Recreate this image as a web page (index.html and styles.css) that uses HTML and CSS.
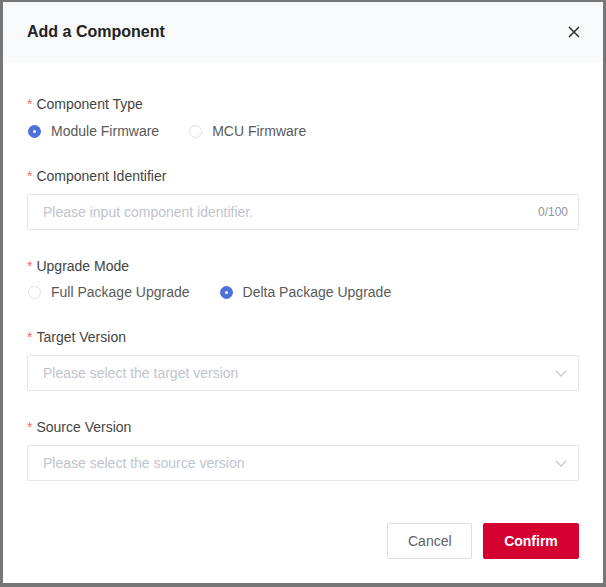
FILE: index.html
```html
<!doctype html>
<html lang="en">
<head>
<meta charset="utf-8">
<meta name="viewport" content="width=device-width,initial-scale=1">
<title>Add a Component</title>
<link rel="stylesheet" href="styles.css">
</head>
<body>
<div class="mask">
<div class="dialog">
  <header class="dlg-head">
    <span class="dlg-title">Add a Component</span>
    <button class="close" aria-label="Close">
      <svg width="12" height="12" viewBox="0 0 12 12"><path d="M1 1L11 11M11 1L1 11" stroke="#333" stroke-width="1.6" fill="none"/></svg>
    </button>
  </header>

  <main class="dlg-body">
    <div class="item radio-item">
      <label class="lbl"><i>*</i>Component Type</label>
      <div class="radios">
        <span class="radio on"><b></b>Module Firmware</span>
        <span class="radio"><b></b>MCU Firmware</span>
      </div>
    </div>

    <div class="item">
      <label class="lbl"><i>*</i>Component Identifier</label>
      <div class="field">
        <span class="ph">Please input component identifier.</span>
        <span class="count">0/100</span>
      </div>
    </div>

    <div class="item radio-item tight">
      <label class="lbl"><i>*</i>Upgrade Mode</label>
      <div class="radios">
        <span class="radio"><b></b>Full Package Upgrade</span>
        <span class="radio on"><b></b>Delta Package Upgrade</span>
      </div>
    </div>

    <div class="item">
      <label class="lbl"><i>*</i>Target Version</label>
      <div class="field">
        <span class="ph">Please select the target version</span>
        <svg class="arrow" width="12" height="7" viewBox="0 0 12 7"><path d="M1 1L6 6L11 1" stroke="#c0c4cc" stroke-width="1.2" fill="none"/></svg>
      </div>
    </div>

    <div class="item">
      <label class="lbl"><i>*</i>Source Version</label>
      <div class="field">
        <span class="ph">Please select the source version</span>
        <svg class="arrow" width="12" height="7" viewBox="0 0 12 7"><path d="M1 1L6 6L11 1" stroke="#c0c4cc" stroke-width="1.2" fill="none"/></svg>
      </div>
    </div>
  </main>

  <footer class="dlg-foot">
    <button class="btn">Cancel</button>
    <button class="btn primary">Confirm</button>
  </footer>
</div>
</div>
</body>
</html>
```

FILE: styles.css
```css
*{box-sizing:border-box}
body{margin:0;background:#767676;font-family:"Liberation Sans",Arial,sans-serif;font-size:14px;color:#333}
.mask{padding:2px 3px}
.dialog{width:600px;height:581px;background:#fff;display:flex;flex-direction:column}
.dlg-head{height:60px;background:#f8f9fb;display:flex;align-items:center;justify-content:space-between;padding:0 23px 0 24px}
.dlg-title{font-size:16px;font-weight:700;color:#222}
.close{border:0;background:none;padding:0;display:flex;cursor:pointer}
.dlg-body{padding:32px 24px 0;flex:1}
.item{margin-bottom:26px}
.item.radio-item{margin-bottom:25px}
.lbl{display:block;line-height:20px;color:#444;margin-bottom:8px}
.radio-item .lbl{margin-bottom:7px}
.radio-item.tight .lbl{margin-bottom:6px}
.lbl i{font-style:normal;color:#f56c6c;margin-right:4px}
.radios{display:flex;line-height:20px;padding-left:1px}
.radio{display:flex;align-items:center;color:#5a5a5a;margin-right:30px}
.radio b{width:13px;height:13px;border:1px solid #dcdfe6;border-radius:50%;margin-right:10px;background:#fff}
.radio.on b{background:#4d70d9;border-color:#4d70d9;position:relative}
.radio.on b:after{content:"";position:absolute;left:4px;top:4px;width:3px;height:3px;border-radius:50%;background:#fff}
.field{height:36px;border:1px solid #e4e5ec;border-radius:2px;display:flex;align-items:center;justify-content:space-between;padding:0 10px 0 15px}
.ph{color:#c0c4cc}
.count{font-size:12px;color:#909399}
.arrow{margin-right:1px}
.dlg-foot{display:flex;justify-content:flex-end;gap:11px;padding:0 24px 24px}
.btn{font:inherit;height:36px;border:1px solid #dcdfe6;border-radius:2px;background:#fff;color:#606266;padding:0 20px;width:85px;cursor:pointer}
.btn.primary{background:#d40030;border-color:#d40030;color:#fff;font-weight:700;width:96px}
```
